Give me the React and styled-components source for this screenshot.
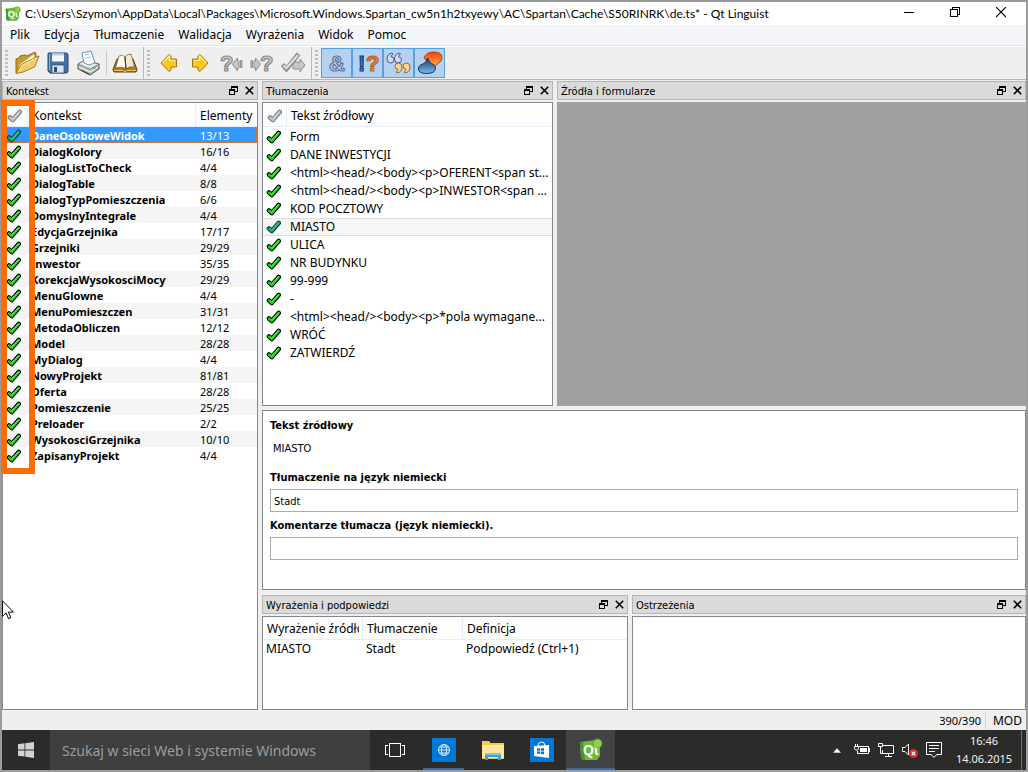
import React from 'react'
import styled, { createGlobalStyle, css } from 'styled-components'

const ui = '"Noto Sans", "Open Sans", sans-serif'
const caption = 'Lato, "Noto Sans", sans-serif'
const tahoma = '"DejaVu Sans Condensed", "DejaVu Sans", sans-serif'

const GlobalStyle = createGlobalStyle`
  *, *::before, *::after {
    box-sizing: border-box;
  }
  body {
    margin: 0;
    background: #9b9b9b;
    font: 12px/16px ${ui};
    color: #000;
  }
  button, input {
    font: inherit;
    color: inherit;
    margin: 0;
    border-radius: 0;
  }
  button {
    padding: 0;
    border: 0;
    background: none;
  }
  svg {
    display: block;
    flex: none;
  }
`

/* ---------- window ---------- */

const Desktop = styled.div`
  display: flex;
  flex-direction: column;
  min-height: 100vh;
  padding: 2px;
`

const Window = styled.div`
  flex: 1;
  display: flex;
  flex-direction: column;
  background: #efefef;
`

const TitleBar = styled.header`
  display: flex;
  align-items: center;
  height: 23px;
  padding: 0 2px 0 3px;
  background: #fff;
`

const Title = styled.h1`
  flex: 1;
  margin: 0 0 0 4px;
  font: 400 12px/16px ${caption};
  white-space: nowrap;
`

const WindowButton = styled.button`
  display: flex;
  justify-content: center;
  align-items: center;
  width: 46px;
  height: 23px;
`

const MenuBar = styled.nav`
  display: flex;
  height: 21px;
  padding-left: 1px;
  background: #f4f5f8;
  border-bottom: 1px solid #e2e4e6;
`

const MenuItem = styled.button`
  padding: 0 7px;
`

/* ---------- toolbar ---------- */

const ToolBar = styled.div`
  display: flex;
  height: 34px;
  border-top: 1px solid #fff;
  border-bottom: 1px solid #b5b5b5;
`

const ToolGroup = styled.div`
  display: flex;
  align-items: center;
  padding: 0 3px;
  ${p => !p.$last && css`
    border-right: 1px solid #b9b9b9;
  `}
`

const Handle = styled.span`
  width: 3px;
  height: 26px;
  margin-right: 3px;
  background: repeating-linear-gradient(#bdbdbd 0 2px, transparent 2px 4px);
`

const Separator = styled.span`
  width: 1px;
  height: 24px;
  margin: 0 2px;
  background: #c8c8c8;
`

const ToolButton = styled.button`
  display: flex;
  justify-content: center;
  align-items: center;
  width: 31px;
  height: 30px;
  ${p => p.$on && css`
    background: #b3d2f1;
    border: 1px solid #5c9fe0;
  `}
`

/* ---------- docks ---------- */

const Main = styled.main`
  flex: 1;
  display: grid;
  grid-template-columns: 25% minmax(0, 1fr);
  gap: 4px;
  padding-top: 1px;
`

const Right = styled.div`
  display: grid;
  grid-template-rows: 1fr auto 115px;
  gap: 4px;
`

const TopDocks = styled.div`
  display: grid;
  grid-template-columns: minmax(0, 291fr) minmax(0, 469fr);
  gap: 4px;
`

const BottomDocks = styled.div`
  display: grid;
  grid-template-columns: minmax(0, 366fr) minmax(0, 394fr);
  gap: 4px;
`

const DockBox = styled.section`
  display: flex;
  flex-direction: column;
  gap: 2px;
`

const DockTitle = styled.div`
  display: flex;
  align-items: center;
  height: 19px;
  padding-left: 3px;
  background: #dadada;
  border: 1px solid #b5b5b5;
`

const DockName = styled.h2`
  flex: 1;
  margin: 0;
  padding-top: 2px;
  font: 11px/15px ${tahoma};
  white-space: nowrap;
`

const DockButton = styled.button`
  display: flex;
  justify-content: center;
  width: 16px;
`

const Pane = styled.div`
  flex: 1;
  background: ${p => (p.$empty ? '#a0a0a0' : '#fff')};
  border: 1px solid ${p => (p.$empty ? '#a0a0a0' : '#828790')};
`

const Dock = ({ title, empty, children }) => (
  <DockBox>
    <DockTitle>
      <DockName>{title}</DockName>
      <DockButton aria-label="Odepnij"><FloatIcon /></DockButton>
      <DockButton aria-label="Zamknij"><CrossIcon /></DockButton>
    </DockTitle>
    <Pane $empty={empty}>{children}</Pane>
  </DockBox>
)

/* ---------- tables ---------- */

const Table = styled.table`
  width: 100%;
  table-layout: fixed;
  border-collapse: separate;
  border-spacing: 0;
`

const Th = styled.th`
  width: ${p => p.$w || 'auto'};
  height: ${p => p.$h || '24px'};
  padding: 2px 3px 0 4px;
  border-right: 1px solid #e2edf9;
  border-bottom: 1px solid #e2edf9;
  background: #fdfdfe;
  font-weight: 400;
  text-align: left;
  white-space: nowrap;
  &:last-child {
    border-right: 0;
  }
`

const Clip = styled.div`
  overflow: hidden;
`

const Td = styled.td`
  height: 18px;
  padding: 0 0 0 3px;
  line-height: 16px;
  white-space: nowrap;
  overflow: hidden;
`

const ContextCell = styled(Td)`
  height: 16px;
  padding: 2px 0 0 ${p => (p.$count ? '4px' : '3px')};
  font-size: 11px;
  line-height: 14px;
  font-weight: ${p => (p.$bold ? 700 : 400)};
`

const ContextRow = styled.tr`
  &:nth-child(even) {
    background: #f5f5f5;
  }
  ${p => p.$selected && css`
    background: #3399ff;
    color: #fff;
    outline: 1px dotted #c87a3c;
    outline-offset: -1px;
  `}
`

const MessageRow = styled.tr`
  ${p => p.$current && css`
    background: #f7f7f7;
    & > td {
      border-top: 1px solid #dedede;
      border-bottom: 1px solid #dedede;
    }
  `}
`

const MessageTable = styled(Table)`
  & > tbody::before {
    content: '';
    display: block;
    height: 1px;
  }
`

/* orange frame drawn over the check column */
const Marked = styled.div`
  position: relative;
  &::after {
    content: '';
    position: absolute;
    top: -3px;
    bottom: -11px;
    left: -2px;
    width: 34px;
    border: 6px solid #ff6d00;
    pointer-events: none;
  }
`

/* ---------- editor ---------- */

const Editor = styled.form`
  display: flex;
  flex-direction: column;
  height: 180px;
  padding: 6px 7px;
  margin-bottom: 1px;
  background: #fff;
  border: 1px solid #828790;
`

const Label = styled.label`
  padding-top: 1px;
  margin-bottom: 3px;
  font: 700 11px/16px ${tahoma};
`

const Source = styled.output`
  margin: 4px 3px 12px;
  font: 11px/16px ${tahoma};
`

const Field = styled.input`
  height: 23px;
  padding: 2px 3px 0;
  margin-bottom: 5px;
  border: 1px solid #ababab;
  font: 11px/16px ${tahoma};
  outline: none;
`

const StatusBar = styled.footer`
  display: flex;
  justify-content: flex-end;
  align-items: center;
  height: 20px;
  padding: 1px 4px 0 0;
`

const Status = styled.span`
  font-size: ${p => (p.$count ? '11px' : '12px')};
  & + & {
    margin-left: 4px;
    padding-left: 7px;
    border-left: 1px solid #d5d5d5;
  }
`

/* ---------- task bar ---------- */

const TaskBar = styled.div`
  display: flex;
  height: 40px;
  background: #2b2b2a;
  color: #f2f2f2;
`

const StartButton = styled.button`
  display: flex;
  justify-content: center;
  align-items: center;
  width: 48px;
`

const Search = styled.input`
  width: 320px;
  padding: 2px 12px 0;
  border: 0;
  outline: none;
  background: #3f3f3f;
  font-size: 14px;
  &::placeholder {
    color: #9c9c9c;
    opacity: 1;
  }
`

const Task = styled.button`
  display: flex;
  justify-content: center;
  align-items: center;
  width: 49px;
  background: ${p => (p.$active ? '#434343' : 'none')};
  ${p => p.$running && css`
    box-shadow: inset 0 -2px #3f669f;
  `}
`

const Edge = styled(Task)`
  width: 41px;
  margin: 0 4px;
`

const Tray = styled.div`
  display: flex;
  align-items: center;
  gap: 8px;
  margin-left: auto;
`

const More = styled.button`
  margin-right: 5px;
`

const Clock = styled.time`
  display: flex;
  flex-direction: column;
  align-items: center;
  width: 68px;
  font-size: 11px;
  line-height: 18px;
`

const ShowDesktop = styled.span`
  width: 5px;
  height: 40px;
  margin-left: -5px;
  border-left: 1px solid #707070;
`

const Pointer = styled.svg`
  position: absolute;
  left: 2px;
  top: 600px;
`

/* ---------- icons ---------- */

const QtIcon = ({ size }) => (
  <svg width={size} height={size} viewBox="0 0 24 24">
    <path d="M1 4 17 2l4 1 0 15-3 4H4L2 20z" fill="#6dbb3c" />
    <path d="M1 4l1 16 2 2h2L4 4z" fill="#4c9426" />
    <text x="4" y="17" fontFamily="Liberation Sans" fontWeight="700" fontSize="14" fill="#fff">Qt</text>
    <circle cx="18.500" cy="5.500" r="4.500" fill="#8fd14f" stroke="#5d9e38" />
  </svg>
)

const FloatIcon = () => (
  <svg width="9" height="9" viewBox="0 0 9 9" fill="none" stroke="#000" shapeRendering="crispEdges">
    <path d="M2.500 3V.5h6v5H6M2 1.500h7M.5 3.500h5v5h-5zM0 4.500h6" />
  </svg>
)

const CrossIcon = () => (
  <svg width="9" height="9" viewBox="0 0 9 9" stroke="#000" strokeWidth="1.600">
    <path d="M.8.8l7.400 7.400M8.200.8L.8 8.200" />
  </svg>
)

const tones = {
  done: ['#000', '#16d916', '#8bff78'],
  current: ['#0d3b4a', '#1fae62', '#6fe0a0'],
  grey: ['#7c7c7c', '#c4c4c4', '#ececec'],
}

const Check = ({ tone = 'done' }) => {
  const [edge, fill, shine] = tones[tone]
  return (
    <svg width="16" height="14" viewBox="0 0 16 14" fill="none" strokeLinejoin="round" strokeLinecap="round">
      <path d="M3 8.500l2.800 2.500L12.700 3" stroke={edge} strokeWidth="4.600" />
      <path d="M3 8.500l2.800 2.500L12.700 3" stroke={fill} strokeWidth="2.400" strokeLinejoin="miter" />
      <path d="M5.800 9.800L12.300 2.600" stroke={shine} strokeWidth=".8" />
    </svg>
  )
}

const OpenIcon = () => (
  <svg width="26" height="26" viewBox="0 0 26 26" strokeLinejoin="round">
    <path d="M2 23V9l3-1 1-2 5-1 2 1 8-4 1 2v6z" fill="#c69a30" stroke="#8f6a17" />
    <path d="M5 15L20 4l1 8-15 9z" fill="#fffbe2" stroke="#c9b366" strokeWidth=".6" />
    <path d="M2 23.500L7 15l7-4 11-5-4.500 11L9 22z" fill="#f3cd63" stroke="#a27a1e" />
    <path d="M4 22l4-6.500 7-3.700 8-4" stroke="#fff0b0" fill="none" />
  </svg>
)

const SaveIcon = () => (
  <svg width="26" height="26" viewBox="0 0 26 26">
    <path d="M3 4q0-1 1-1h17q2 0 2 2v16q0 2-2 2H5l-2-2z" fill="#47719f" stroke="#24466e" />
    <path d="M4.500 4v16" stroke="#8db4da" />
    <path d="M7 3.500h12v8H7z" fill="#f3f6fa" />
    <path d="M7 3.500h12v2H7z" fill="#bccde0" />
    <path d="M7 15h12v8H7z" fill="#dfe4ea" stroke="#24466e" strokeWidth=".7" />
    <path d="M9 17h3v5H9z" fill="#2b4a70" />
  </svg>
)

const PrintIcon = () => (
  <svg width="26" height="26" viewBox="0 0 26 26" strokeLinejoin="round">
    <path d="M2 14l7-4 14 4v5l-9 6-12-6z" fill="#b9b9b9" stroke="#555" />
    <path d="M2 14l7-4 14 4-9 5z" fill="#ececec" stroke="#666" strokeWidth=".7" />
    <path d="M8 13L6 3l9-2 4 12-6 2z" fill="#f5faff" stroke="#6d93bf" />
    <path d="M8.500 5l5-1M9 8l6-1" stroke="#a9c8e8" />
    <path d="M3 17l11 5 8-5" stroke="#fff" fill="none" />
    <path d="M5 20l8 4" stroke="#333" />
    <path d="M17 19l3-2" stroke="#4caf50" strokeWidth="1.500" />
  </svg>
)

const BookIcon = () => (
  <svg width="26" height="26" viewBox="0 0 26 26" strokeLinejoin="round">
    <path d="M1 19.500L5 9h16l4 10.500-1 2.500H2z" fill="#ad7a25" stroke="#5c3f10" />
    <path d="M3.500 18L7 6q4-2 6 1l1 12q-4-3-10.500-1z" fill="#fffef2" stroke="#6a5a38" strokeWidth=".7" />
    <path d="M22.500 17L19 4q-4 0-6 3l1 12q3-3 8.500-2z" fill="#f1ebcd" stroke="#6a5a38" strokeWidth=".7" />
    <path d="M13 7l1 12" stroke="#3c2f18" />
    <path d="M2 20.500h9l2 1.500 2-1.500h9" stroke="#f5c24a" fill="none" />
  </svg>
)

const ArrowIcon = ({ flip }) => (
  <svg width="26" height="26" viewBox="0 0 26 26">
    <g transform={flip ? 'matrix(-1 0 0 1 26 0)' : undefined}>
      <path d="M5 13l8-8.500 2 1.500v3h5.500v8H15v3l-2 1.500z" fill="#ffc81e" stroke="#a8730a" strokeLinejoin="round" />
      <path d="M7 12.500l6.500-6.500v4.500H19" fill="none" stroke="#fff09a" strokeWidth="1.200" />
    </g>
  </svg>
)

const GreyArrow = ({ d }) => (
  <path d={d} fill="#c6c6c6" stroke="#8e8e8e" strokeLinejoin="round" />
)

const Question = ({ x }) => (
  <text x={x} y="21" fontFamily="Liberation Sans" fontWeight="700" fontSize="22" fill="#cfcfcf" stroke="#868686" strokeWidth="1.200">?</text>
)

const PrevUnfinished = () => (
  <svg width="26" height="26" viewBox="0 0 26 26">
    <Question x="2" />
    <GreyArrow d="M14.500 14l5-6v3H21v7h-1.500v3zM22.500 10.500H24v7h-1.500z" />
  </svg>
)

const NextUnfinished = () => (
  <svg width="26" height="26" viewBox="0 0 26 26">
    <Question x="11" />
    <GreyArrow d="M11.500 14l-5-6v3H5v7h1.500v3zM2 10.500h1.500v7H2z" />
  </svg>
)

const DoneNext = () => (
  <svg width="26" height="26" viewBox="0 0 26 26">
    <GreyArrow d="M25 15l-5-6v3h-7v7h7v3z" />
    <path d="M2.500 14.500l4 4.500L18.500 4" fill="none" stroke="#868686" strokeWidth="4.500" />
    <path d="M3.300 15.500l3.200 2.500L18 5" fill="none" stroke="#dadada" strokeWidth="2.500" />
  </svg>
)

const AmpIcon = () => (
  <svg width="26" height="26" viewBox="0 0 26 26">
    <text x="5" y="21" fontFamily="Liberation Sans" fontWeight="700" fontSize="22" fill="#cbd6ea" stroke="#5d729c" strokeWidth="1.200">&amp;</text>
  </svg>
)

const PunctIcon = () => (
  <svg width="26" height="26" viewBox="0 0 26 26">
    <defs>
      <linearGradient id="orange" x2="0" y2="1">
        <stop stopColor="#f04a18" />
        <stop offset="1" stopColor="#ffd36a" />
      </linearGradient>
      <linearGradient id="blue" x2="0" y2="1">
        <stop stopColor="#1d4aa6" />
        <stop offset="1" stopColor="#6cc0f4" />
      </linearGradient>
    </defs>
    <g fontFamily="Liberation Sans" fontWeight="700" fontSize="22" strokeWidth="1.200">
      <text x="3" y="21" fill="url(#blue)" stroke="#1b3c80">!</text>
      <text x="11" y="21" fill="url(#orange)" stroke="#b0602c">?</text>
    </g>
  </svg>
)

const quote = 'M6 3q-5 1-5 6 0 4 3.500 4T8 9.700Q8 7 5 6.800 5 5 7 4z'

const QuoteIcon = () => (
  <svg width="26" height="26" viewBox="0 0 26 26">
    <g fill="#d3dcef" stroke="#44598a">
      <path d={quote} />
      <path d={quote} transform="translate(7.500 0)" />
    </g>
    <g fill="#ffd68b" stroke="#94692b">
      <path d={quote} transform="rotate(180 8.500 13)" />
      <path d={quote} transform="rotate(180 12.500 13)" />
    </g>
  </svg>
)

const PlaceIcon = () => (
  <svg width="26" height="26" viewBox="0 0 26 26">
    <defs>
      <linearGradient id="fire" x2="0" y2="1">
        <stop stopColor="#ff3d0c" />
        <stop offset="1" stopColor="#ffc24a" />
      </linearGradient>
      <linearGradient id="sea" x2="0" y2="1">
        <stop stopColor="#173e6c" />
        <stop offset="1" stopColor="#79bce8" />
      </linearGradient>
    </defs>
    <path d="M7 8q2-6 9-6 9 0 9 5.500 0 4-4 6-3 1.500-5 5.500l-3-6z" fill="url(#fire)" stroke="#a04a18" />
    <path d="M1.500 19q0-4 4.500-5 3-1 4.500-6 1.500 3 3.500 5.500 4.500 1 4.500 5Q18 23.500 9.500 23.500q-8 0-8-4.500z" fill="url(#sea)" stroke="#173659" />
  </svg>
)

const WindowsIcon = () => (
  <svg width="16" height="16" viewBox="0 0 16 16" fill="#d2d2d2">
    <path d="M0 2.200L6.500 1.300v6.200H0zM7.300 1.200L16 0v7.500H7.300zM0 8.400h6.500v6.200L0 13.700zM7.300 8.400H16V16l-8.700-1.200z" />
  </svg>
)

const TaskViewIcon = () => (
  <svg width="20" height="14" viewBox="0 0 20 14" fill="none" stroke="#fff" shapeRendering="crispEdges">
    <path d="M4.500.5h11v13h-11zM3 2.500H.5v9H3M17 2.500h2.500v9H17" />
  </svg>
)

const EdgeIcon = () => (
  <svg width="24" height="24" viewBox="0 0 24 24" fill="none" stroke="#d9ebfb">
    <path d="M0 0h24v24H0z" fill="#0078d7" stroke="none" />
    <circle cx="12" cy="12" r="5.500" />
    <ellipse cx="12" cy="12" rx="2.500" ry="5.500" />
    <path d="M6.500 12h11M7.300 9h9.400M7.300 15h9.400" />
  </svg>
)

const FolderIcon = () => (
  <svg width="24" height="24" viewBox="0 0 24 24">
    <path d="M1 3h7l1.500 2H23v16H1z" fill="#f2c94d" />
    <path d="M1 7h22v13H1z" fill="#fce79a" />
    <path d="M4 15h16v7h-3v-3H7v3H4z" fill="#3aa0de" />
    <path d="M4 15h16v2H4z" fill="#7cc6ee" />
  </svg>
)

const StoreIcon = () => (
  <svg width="24" height="24" viewBox="0 0 24 24">
    <path d="M0 0h24v24H0z" fill="#0078d7" />
    <path d="M8 8q0-4 3.500-4T15 8" fill="none" stroke="#fff" />
    <path d="M4 8l15-1v13L4 18z" fill="#fff" />
    <path d="M7 10.500l3-.3v2.500H7zM10.800 10.200l3.200-.3v2.800h-3.200zM7 13.400h3v2.500l-3-.3zM10.800 13.400H14v2.800l-3.200-.3z" fill="#0078d7" />
  </svg>
)

const UpIcon = () => (
  <svg width="8" height="5" viewBox="0 0 9 5">
    <path d="M4.500 0L9 5H0z" fill="#f4f4f4" />
  </svg>
)

const BatteryIcon = () => (
  <svg width="16" height="16" viewBox="0 0 16 16" fill="none" stroke="#fff">
    <path d="M5 4.500h9.500v7H3.500V9" />
    <path d="M6 6h7v4H6zM15 6h1v4h-1z" fill="#fff" stroke="none" />
    <path d="M.5 4.500h4v2l-1 1.500h-2l-1-1.500zM1.500 2v2M3.500 2v2" />
  </svg>
)

const NetworkIcon = () => (
  <svg width="16" height="16" viewBox="0 0 16 16" fill="none" stroke="#fff">
    <path d="M5 3.500h10.500v8H4.500V8M10.500 11.500v3M7 14.500h7M.5 1.500h4v3h-4zM2.500 4.500v7h2" />
  </svg>
)

const MutedIcon = () => (
  <svg width="16" height="16" viewBox="0 0 16 16">
    <path d="M.5 5.500H3L6.500 2v11L3 9.500H.5z" fill="none" stroke="#fff" />
    <circle cx="11.500" cy="11.500" r="4.500" fill="#d92b2f" />
    <path d="M9.700 9.700l3.600 3.600M13.300 9.700l-3.600 3.600" stroke="#fff" strokeWidth="1.200" />
  </svg>
)

const ActionIcon = () => (
  <svg width="16" height="16" viewBox="0 0 16 16" fill="none" stroke="#fff">
    <path d="M.5.5h15v12H11L8 15.300 5 12.500H.5zM3 3.500h10M3 6.500h10M3 9.500h6" />
  </svg>
)

/* ---------- data ---------- */

const menus = ['Plik', 'Edycja', 'Tłumaczenie', 'Walidacja', 'Wyrażenia', 'Widok', 'Pomoc']

const contexts = [
  ['DaneOsoboweWidok', 13],
  ['DialogKolory', 16],
  ['DialogListToCheck', 4],
  ['DialogTable', 8],
  ['DialogTypPomieszczenia', 6],
  ['DomyslnyIntegrale', 4],
  ['EdycjaGrzejnika', 17],
  ['Grzejniki', 29],
  ['Inwestor', 35],
  ['KorekcjaWysokosciMocy', 29],
  ['MenuGlowne', 4],
  ['MenuPomieszczen', 31],
  ['MetodaObliczen', 12],
  ['Model', 28],
  ['MyDialog', 4],
  ['NowyProjekt', 81],
  ['Oferta', 28],
  ['Pomieszczenie', 25],
  ['Preloader', 2],
  ['WysokosciGrzejnika', 10],
  ['ZapisanyProjekt', 4],
]

const messages = [
  'Form',
  'DANE INWESTYCJI',
  '<html><head/><body><p>OFERENT<span st...',
  '<html><head/><body><p>INWESTOR<span ...',
  'KOD POCZTOWY',
  'MIASTO',
  'ULICA',
  'NR BUDYNKU',
  '99-999',
  '-',
  '<html><head/><body><p>*pola wymagane...',
  'WRÓĆ',
  'ZATWIERDŹ',
]

const App = () => (
  <Desktop>
    <GlobalStyle />
    <Window>
      <TitleBar>
        <QtIcon size={16} />
        <Title>C:\Users\Szymon\AppData\Local\Packages\Microsoft.Windows.Spartan_cw5n1h2txyewy\AC\Spartan\Cache\S50RINRK\de.ts* - Qt Linguist</Title>
        <WindowButton aria-label="Minimalizuj">
          <svg width="10" height="10" stroke="#000" shapeRendering="crispEdges"><path d="M0 3.500h10" /></svg>
        </WindowButton>
        <WindowButton aria-label="Przywróć">
          <svg width="10" height="14" fill="none" stroke="#000" shapeRendering="crispEdges"><path d="M.5 2.500h7v7h-7zM2.500 2V.5h7v7H8" /></svg>
        </WindowButton>
        <WindowButton aria-label="Zamknij">
          <svg width="10" height="14" stroke="#000" strokeWidth="1.200"><path d="M0 0l10 10M10 0L0 10" /></svg>
        </WindowButton>
      </TitleBar>

      <MenuBar>
        {menus.map(m => <MenuItem key={m}>{m}</MenuItem>)}
      </MenuBar>

      <ToolBar>
        <ToolGroup>
          <Handle />
          <ToolButton aria-label="Otwórz"><OpenIcon /></ToolButton>
          <ToolButton aria-label="Zapisz"><SaveIcon /></ToolButton>
          <ToolButton aria-label="Drukuj"><PrintIcon /></ToolButton>
          <Separator />
          <ToolButton aria-label="Książka wyrażeń"><BookIcon /></ToolButton>
        </ToolGroup>
        <ToolGroup>
          <Handle />
          <ToolButton aria-label="Poprzedni"><ArrowIcon /></ToolButton>
          <ToolButton aria-label="Następny"><ArrowIcon flip /></ToolButton>
          <ToolButton aria-label="Poprzedni niezakończony"><PrevUnfinished /></ToolButton>
          <ToolButton aria-label="Następny niezakończony"><NextUnfinished /></ToolButton>
          <ToolButton aria-label="Gotowe i następny"><DoneNext /></ToolButton>
        </ToolGroup>
        <ToolGroup $last>
          <Handle />
          <ToolButton $on aria-label="Akceleratory"><AmpIcon /></ToolButton>
          <ToolButton $on aria-label="Końcowa interpunkcja"><PunctIcon /></ToolButton>
          <ToolButton $on aria-label="Zgodność wyrażeń"><QuoteIcon /></ToolButton>
          <ToolButton $on aria-label="Znaczniki miejsca"><PlaceIcon /></ToolButton>
        </ToolGroup>
      </ToolBar>

      <Main>
        <Dock title="Kontekst">
          <Marked>
            <Table>
              <thead>
                <tr>
                  <Th $w="25px"><Check tone="grey" /></Th>
                  <Th>Kontekst</Th>
                  <Th $w="61px">Elementy</Th>
                </tr>
              </thead>
              <tbody>
                {contexts.map(([name, count], i) => (
                  <ContextRow key={name} $selected={i === 0}>
                    <ContextCell><Check tone={i === 0 ? 'current' : 'done'} /></ContextCell>
                    <ContextCell $bold>{name}</ContextCell>
                    <ContextCell $count>{`${count}/${count}`}</ContextCell>
                  </ContextRow>
                ))}
              </tbody>
            </Table>
          </Marked>
        </Dock>

        <Right>
          <TopDocks>
            <Dock title="Tłumaczenia">
              <MessageTable>
                <thead>
                  <tr>
                    <Th $w="24px"><Check tone="grey" /></Th>
                    <Th>Tekst źródłowy</Th>
                  </tr>
                </thead>
                <tbody>
                  {messages.map(text => (
                    <MessageRow key={text} $current={text === 'MIASTO'}>
                      <Td><Check tone={text === 'MIASTO' ? 'current' : 'done'} /></Td>
                      <Td>{text}</Td>
                    </MessageRow>
                  ))}
                </tbody>
              </MessageTable>
            </Dock>
            <Dock title="Źródła i formularze" empty />
          </TopDocks>

          <Editor onSubmit={e => e.preventDefault()}>
            <Label htmlFor="source">Tekst źródłowy</Label>
            <Source id="source">MIASTO</Source>
            <Label htmlFor="translation">Tłumaczenie na język niemiecki</Label>
            <Field id="translation" defaultValue="Stadt" />
            <Label htmlFor="comment">Komentarze tłumacza (język niemiecki).</Label>
            <Field id="comment" />
          </Editor>

          <BottomDocks>
            <Dock title="Wyrażenia i podpowiedzi">
              <Table>
                <thead>
                  <tr>
                    <Th $w="100px" $h="23px"><Clip>Wyrażenie źródłow</Clip></Th>
                    <Th $w="100px" $h="23px">Tłumaczenie</Th>
                    <Th $h="23px">Definicja</Th>
                  </tr>
                </thead>
                <tbody>
                  <tr>
                    <Td>MIASTO</Td>
                    <Td>Stadt</Td>
                    <Td>Podpowiedź (Ctrl+1)</Td>
                  </tr>
                </tbody>
              </Table>
            </Dock>
            <Dock title="Ostrzeżenia" />
          </BottomDocks>
        </Right>
      </Main>

      <StatusBar>
        <Status $count>390/390</Status>
        <Status>MOD</Status>
      </StatusBar>
    </Window>

    <TaskBar>
      <StartButton aria-label="Start"><WindowsIcon /></StartButton>
      <Search aria-label="Szukaj" placeholder="Szukaj w sieci Web i systemie Windows" />
      <Task aria-label="Widok zadań"><TaskViewIcon /></Task>
      <Edge $running aria-label="Przeglądarka"><EdgeIcon /></Edge>
      <Task aria-label="Eksplorator plików"><FolderIcon /></Task>
      <Task aria-label="Sklep"><StoreIcon /></Task>
      <Task $running $active aria-label="Qt Linguist"><QtIcon size={24} /></Task>
      <Tray>
        <More aria-label="Pokaż ukryte ikony"><UpIcon /></More>
        <BatteryIcon />
        <NetworkIcon />
        <MutedIcon />
        <ActionIcon />
        <Clock>
          <span>16:46</span>
          <span>14.06.2015</span>
        </Clock>
        <ShowDesktop />
      </Tray>
    </TaskBar>

    <Pointer width="13" height="20" viewBox="0 0 13 20">
      <path d="M.5.8v15.500l3.600-3.400 2.500 5.800 2.300-1-2.500-5.600h5z" fill="#fff" stroke="#000" />
    </Pointer>
  </Desktop>
)

export default App
